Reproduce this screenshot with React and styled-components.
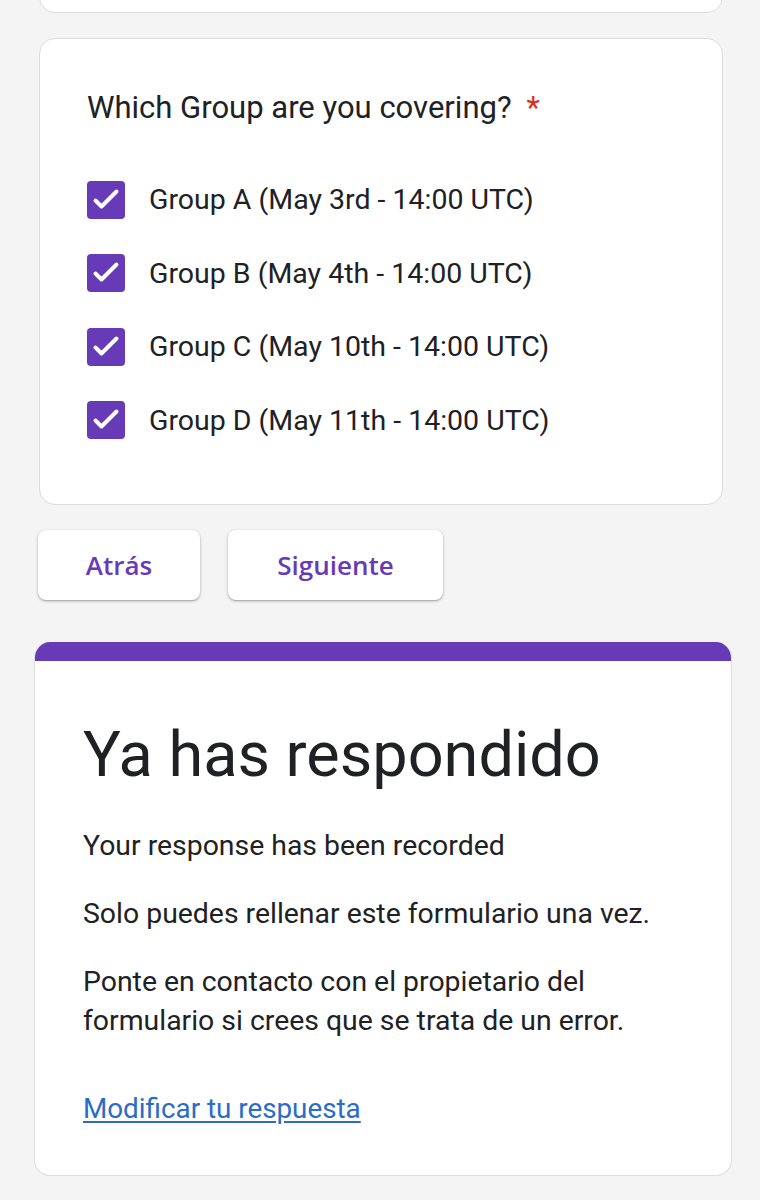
import React from 'react'
import styled, { createGlobalStyle } from 'styled-components'

const GlobalStyle = createGlobalStyle`
  body {
    margin: 0;
    background: #f4f4f4;
    font-family: Roboto, "Liberation Sans", sans-serif;
    color: #202124;
  }
`

const Page = styled.div`
  width: 760px;
  height: 1200px;
  overflow: hidden;
  display: flex;
  flex-direction: column;
`

const Column = styled.div`
  margin: 0 37px 0 39px;
  display: flex;
  flex-direction: column;
`

const Card = styled.div`
  background: #fff;
  border: 1px solid #dadce0;
  border-radius: 16px;
`

const StubCard = styled(Card)`
  height: 40px;
  margin-top: -29px;
`

const QuestionCard = styled(Card)`
  margin-top: 25px;
  padding: 49px 47px 47px;
`

const Question = styled.div`
  font-size: 31px;
  line-height: 40px;
  margin-bottom: 35px;
`

const Required = styled.span`
  color: #d93025;
  margin-left: 15px;
`

const Options = styled.div`
  display: flex;
  flex-direction: column;
`

const Option = styled.label`
  height: 73.5px;
  display: flex;
  align-items: center;
  gap: 24px;
  font-size: 28.5px;
`

const Box = styled.span`
  width: 38px;
  height: 38px;
  border-radius: 4px;
  background: #673ab7;
  display: flex;
  flex-shrink: 0;
`

const Buttons = styled.div`
  display: flex;
  gap: 28px;
  margin: 25px 0 0 -1px;
`

const NavButton = styled.button`
  height: 70px;
  width: ${p => p.$w}px;
  border: none;
  border-radius: 8px;
  background: #fff;
  box-shadow: 0 1px 3px rgba(0, 0, 0, 0.3), 0 1px 1px rgba(0, 0, 0, 0.1);
  color: #673ab7;
  font-family: "Open Sans", sans-serif;
  font-weight: 600;
  font-size: 26px;
  padding: 0;
`

const ResultCard = styled.div`
  margin: 42px 28px 0 34px;
  background: #fff;
  border: 1px solid #dadce0;
  border-top: none;
  border-radius: 16px;
  overflow: hidden;
`

const TopBar = styled.div`
  height: 19px;
  background: #673ab7;
`

const ResultBody = styled.div`
  padding: 54px 48px 47px;
  display: flex;
  flex-direction: column;
`

const Title = styled.h1`
  margin: 0 0 31px;
  font-size: 63px;
  font-weight: 400;
  line-height: 80px;
`

const Text = styled.p`
  margin: 0 0 ${p => p.$gap ?? 29}px;
  font-size: 28.4px;
  line-height: 39px;
`

const EditLink = styled.a`
  font-size: 27.8px;
  line-height: 39px;
  color: #2a6cc6;
  text-decoration: underline;
  text-underline-offset: 3px;
  align-self: flex-start;
`

const Check = () => (
  <svg width="38" height="38" viewBox="0 0 38 38">
    <path d="M8.5 19.5l6 6L29.5 10.5" fill="none" stroke="#fff" strokeWidth="4" strokeLinecap="round" strokeLinejoin="round" />
  </svg>
)

const groups = [
  'Group A (May 3rd - 14:00 UTC)',
  'Group B (May 4th - 14:00 UTC)',
  'Group C (May 10th - 14:00 UTC)',
  'Group D (May 11th - 14:00 UTC)',
]

const App = () => {
  return (
    <Page>
      <GlobalStyle />
      <Column>
        <StubCard />
        <QuestionCard>
          <Question>
            Which Group are you covering?<Required>*</Required>
          </Question>
          <Options>
            {groups.map(g => (
              <Option key={g}>
                <Box><Check /></Box>
                {g}
              </Option>
            ))}
          </Options>
        </QuestionCard>
        <Buttons>
          <NavButton $w={162}>Atrás</NavButton>
          <NavButton $w={215}>Siguiente</NavButton>
        </Buttons>
      </Column>
      <ResultCard>
        <TopBar />
        <ResultBody>
          <Title>Ya has respondido</Title>
          <Text>Your response has been recorded</Text>
          <Text>Solo puedes rellenar este formulario una vez.</Text>
          <Text $gap={49}>
            Ponte en contacto con el propietario del formulario si crees que se trata de un error.
          </Text>
          <EditLink href="#">Modificar tu respuesta</EditLink>
        </ResultBody>
      </ResultCard>
    </Page>
  )
}

export default App
